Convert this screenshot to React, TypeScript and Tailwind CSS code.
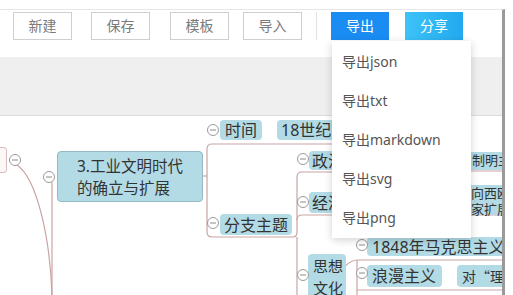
import React from "react";

const LINE = "#c9a4a4";

const Collapse: React.FC<{ x: number; y: number }> = ({ x, y }) => (
  <g>
    <circle cx={x} cy={y} r={5.5} fill="#fff" stroke="#9a9a9a" strokeWidth={1} />
    <line x1={x - 3} y1={y} x2={x + 3} y2={y} stroke="#8a8a8a" strokeWidth={1} />
  </g>
);

const ToolButton: React.FC<{ label: string; className?: string }> = ({ label, className }) => (
  <button
    className={
      "h-[28px] w-[59px] flex items-center justify-center border border-[#cfcfcf] bg-white text-[14px] text-[#7a7a7a] " +
      (className ?? "")
    }
  >
    {label}
  </button>
);

const exportItems = ["导出json", "导出txt", "导出markdown", "导出svg", "导出png"];

export default function App() {
  return (
    <div className="relative w-[513px] h-[295px] overflow-hidden bg-white font-['Noto_Sans','Noto_Sans_CJK_SC',sans-serif]">
      <div className="mt-[9px] w-[505px] h-[286px] flex flex-col border-t border-[#e6e6e6] border-r-[3px] border-r-[#9a9a9a]">
        {/* toolbar */}
        <div className="flex items-center h-[47px] pb-[17px] pt-[1px] pl-[13px]">
          <ToolButton label="新建" />
          <ToolButton label="保存" className="ml-[19px]" />
          <ToolButton label="模板" className="ml-[20px]" />
          <ToolButton label="导入" className="ml-[14px]" />
          <div className="ml-[14px] h-[28px] w-px bg-[#e2e2e2]" />
          <button className="ml-[14px] h-[28px] w-[58px] flex items-center justify-center bg-[#1a8cf2] text-[14px] text-white">
            导出
          </button>
          <button className="ml-[16px] h-[28px] w-[58px] flex items-center justify-center bg-gradient-to-r from-[#3dc3f7] to-[#21a9ef] text-[14px] text-white">
            分享
          </button>
        </div>

        {/* gray band */}
        <div className="h-[59px] bg-[#efefef] border-b border-[#dcdcdc]" />

        {/* mind map canvas */}
        <div className="relative flex-1 overflow-hidden bg-white">
          <svg className="absolute left-0 top-0" width={502} height={180} fill="none">
            <path d="M17 49 C 36 62, 50 118, 52 180" stroke={LINE} strokeWidth={1.2} />
            <path d="M52 66 V180" stroke={LINE} strokeWidth={1.2} />
            <path d="M203 60 H207" stroke={LINE} strokeWidth={1.2} />
            <path d="M345 28 H212 Q207 28 207 33 V116 Q207 121 212 121 H293" stroke={LINE} strokeWidth={1.2} />
            <path d="M293 121 Q297 121 297 116 V61 Q297 56 302 56 H340" stroke={LINE} strokeWidth={1.2} />
            <path d="M297 104 Q297 99 302 99 H340" stroke={LINE} strokeWidth={1.2} />
            <path d="M297 121 V180" stroke={LINE} strokeWidth={1.2} />
            <path d="M465 55 H503" stroke={LINE} strokeWidth={1.2} />
            <path d="M465 99 H503" stroke={LINE} strokeWidth={1.2} />
            <path d="M345 150 Q352 144 357 144 H503" stroke={LINE} strokeWidth={1.2} />
            <path d="M357 144 V180" stroke={LINE} strokeWidth={1.2} />
            <path d="M357 174 H503" stroke={LINE} strokeWidth={1.2} />
          </svg>

          {/* left partial node */}
          <div className="absolute left-[-6px] top-[31px] w-[13px] h-[26px] rounded-[3px] border border-[#d9bcbc] bg-[#fbf7f7]" />

          {/* main node */}
          <div className="absolute left-[57px] top-[35px] w-[146px] h-[51px] rounded-[4px] border border-[#97b9c5] bg-[#b2dbe6] pl-[19px] pt-[3px] text-[15.5px] leading-[22px] text-[#333]">
            <div>3.工业文明时代</div>
            <div>的确立与扩展</div>
          </div>

          <div className="absolute left-[220px] top-[4px] h-[20px] px-[5px] rounded-[4px] bg-[#b2dbe6] flex items-center text-[16px] text-[#333]">
            时间
          </div>
          <div className="absolute left-[277px] top-[4px] h-[20px] w-[80px] px-[4px] rounded-[4px] bg-[#b2dbe6] flex items-center text-[16px] text-[#333]">
            18世纪中
          </div>
          <div className="absolute left-[220px] top-[98px] h-[21px] px-[4px] rounded-[4px] bg-[#b2dbe6] flex items-center text-[16px] text-[#333]">
            分支主题
          </div>
          <div className="absolute left-[309px] top-[35px] h-[19px] w-[40px] px-[3px] rounded-[4px] bg-[#b2dbe6] flex items-center text-[16px] text-[#333]">
            政治
          </div>
          <div className="absolute left-[309px] top-[76px] h-[21px] w-[40px] px-[3px] rounded-[4px] bg-[#b2dbe6] flex items-center text-[16px] text-[#333]">
            经济
          </div>
          <div className="absolute left-[464px] top-[36px] h-[18px] w-[60px] pl-[8px] rounded-[4px] bg-[#b2dbe6] flex items-center text-[13px] text-[#333] whitespace-nowrap">
            制明主义
          </div>
          <div className="absolute left-[464px] top-[69px] h-[30px] w-[60px] pl-[7px] rounded-[4px] bg-[#b2dbe6] text-[13px] leading-[16px] text-[#333] whitespace-nowrap">
            <div>向西欧</div>
            <div>家扩展</div>
          </div>
          <div className="absolute left-[308px] top-[138px] h-[50px] w-[38px] pl-[5px] pt-[1px] rounded-[4px] bg-[#b2dbe6] text-[15px] leading-[22px] text-[#333]">
            <div>思想</div>
            <div>文化</div>
          </div>
          <div className="absolute left-[367px] top-[121px] h-[19px] w-[150px] pl-[5px] rounded-[4px] bg-[#b2dbe6] flex items-center text-[16px] text-[#333] whitespace-nowrap">
            1848年马克思主义
          </div>
          <div className="absolute left-[367px] top-[149px] h-[22px] w-[75px] pl-[5px] rounded-[4px] bg-[#b2dbe6] flex items-center text-[16px] text-[#333]">
            浪漫主义
          </div>
          <div className="absolute left-[457px] top-[149px] h-[22px] w-[60px] pl-[5px] rounded-[4px] bg-[#b2dbe6] flex items-center font-['Noto_Sans_CJK_SC',sans-serif] text-[14px] text-[#333] whitespace-nowrap">
            对“理性
          </div>

          <svg className="absolute left-0 top-0" width={502} height={180} fill="none">
            <Collapse x={15} y={44} />
            <Collapse x={49} y={61} />
            <Collapse x={213} y={14} />
            <Collapse x={213} y={107} />
            <Collapse x={303} y={43} />
            <Collapse x={303} y={86} />
            <Collapse x={303} y={159} />
            <Collapse x={362} y={129} />
            <Collapse x={362} y={157} />
          </svg>
        </div>
      </div>

      {/* export dropdown */}
      <div className="absolute left-[332px] top-[41px] w-[139px] h-[197px] bg-white pt-[1px] shadow-[0_2px_8px_rgba(0,0,0,0.18)]">
        {exportItems.map((item) => (
          <div key={item} className="h-[39px] flex items-center pl-[10px] text-[14px] text-[#555]">
            {item}
          </div>
        ))}
      </div>
    </div>
  );
}
